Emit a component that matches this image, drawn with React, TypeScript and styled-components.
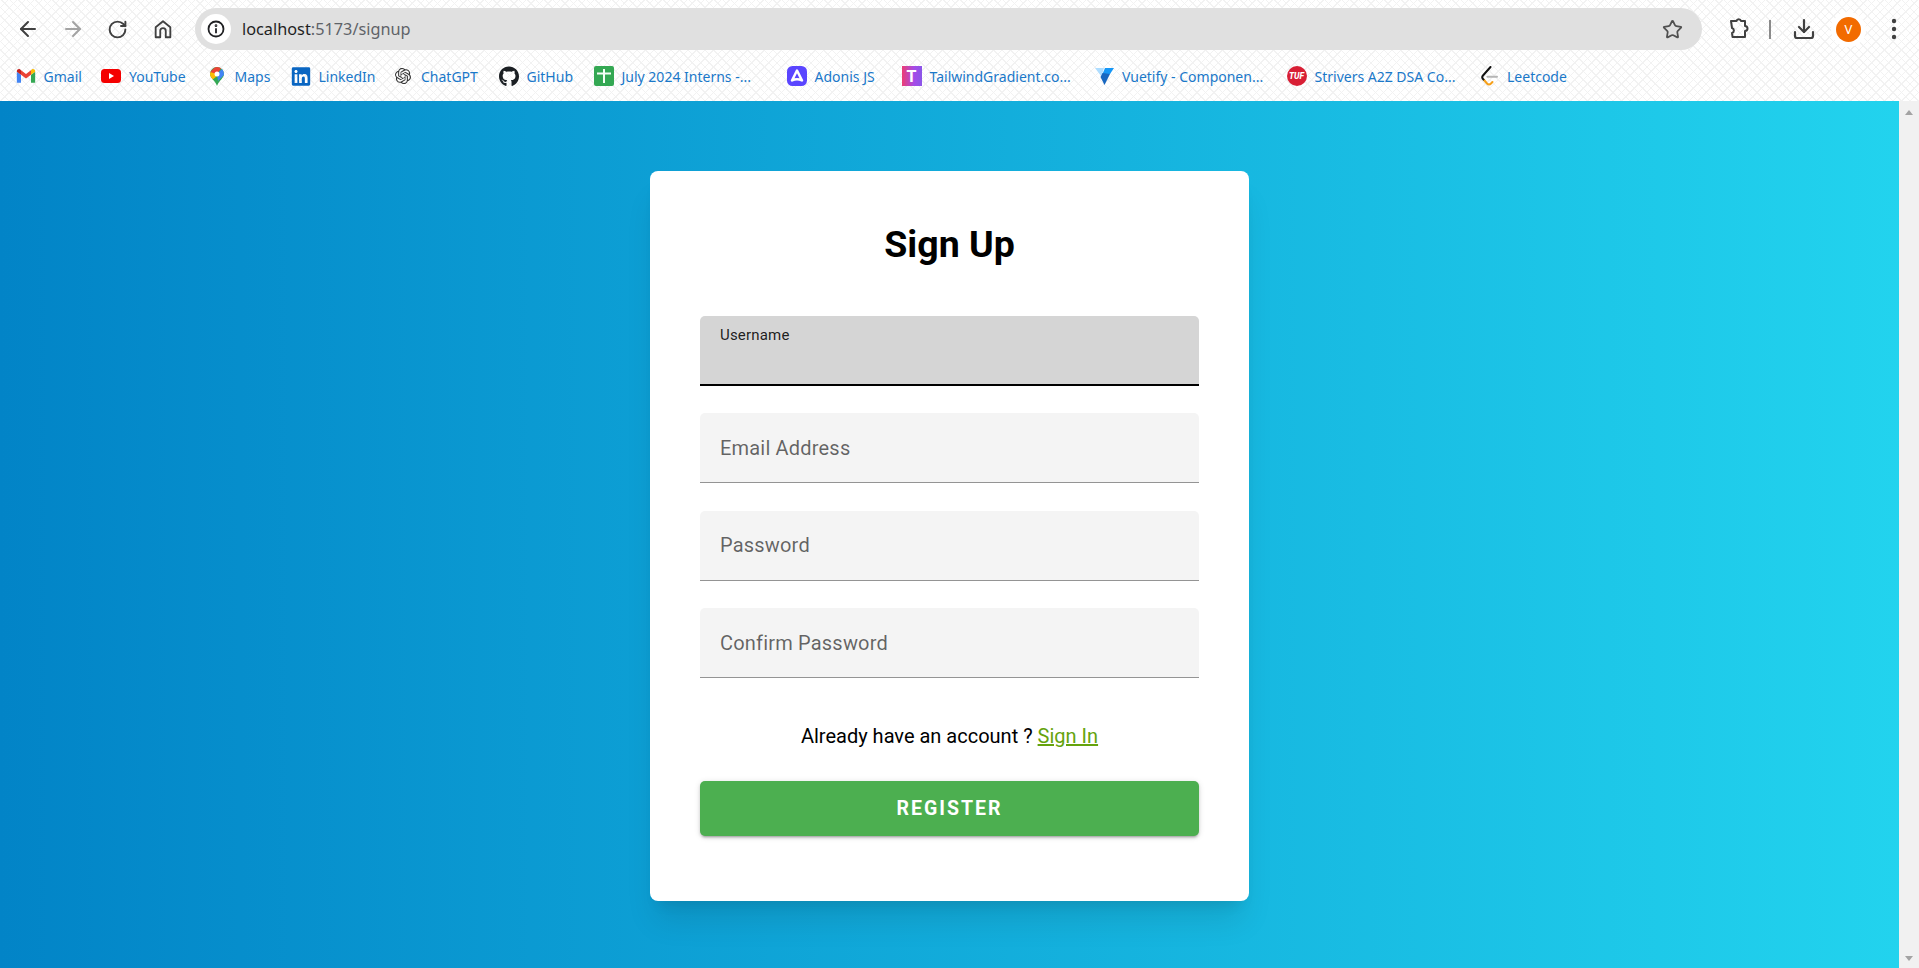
import type { ReactNode } from "react";
import styled, { createGlobalStyle } from "styled-components";
import { ArrowLeft, ArrowRight, Download, RotateCw, Star } from "lucide-react";
import { FaGithub, FaLinkedin } from "react-icons/fa";
import { SiOpenai } from "react-icons/si";

const GlobalStyle = createGlobalStyle`
  html, body {
    margin: 0;
    padding: 0;
    height: 100%;
    overflow: hidden;
    background: #fff;
  }
  * {
    box-sizing: border-box;
  }
`;

const Page = styled.div`
  display: flex;
  flex-direction: column;
  width: 1919px;
  height: 968px;
  overflow: hidden;
`;

/* browser chrome */

const Chrome = styled.header`
  display: flex;
  flex-direction: column;
  height: 101px;
  flex: none;
  background-color: #fff;
  background-image:
    repeating-linear-gradient(45deg, #f2f2f2 0 1px, transparent 1px 6px),
    repeating-linear-gradient(-45deg, #f2f2f2 0 1px, transparent 1px 6px);
  font-family: "Noto Sans", sans-serif;
`;

const Toolbar = styled.div`
  display: flex;
  align-items: center;
  height: 58px;
  padding: 0 3px 0 5px;
`;

const ToolButton = styled.div<{ $muted?: boolean }>`
  display: flex;
  flex: none;
  align-items: center;
  justify-content: center;
  width: 45px;
  height: 42px;
  color: ${(p) => (p.$muted ? "#a3a3a3" : "#404040")};
`;

const AddressBar = styled.div`
  display: flex;
  flex: 1;
  align-items: center;
  height: 42px;
  margin: 0 13px 0 10px;
  padding: 0 19px 0 6px;
  border-radius: 21px;
  background: #e0e0e0;
`;

const InfoBadge = styled.div`
  display: flex;
  flex: none;
  align-items: center;
  justify-content: center;
  width: 30px;
  height: 30px;
  border-radius: 50%;
  background: #fff;
  color: #202124;
`;

const Url = styled.div`
  flex: 1;
  margin-left: 11px;
  font-size: 16.3px;
  color: #5f6368;
  white-space: nowrap;

  b {
    font-weight: 400;
    color: #1f1f1f;
  }
`;

const Separator = styled.div`
  flex: none;
  width: 2px;
  height: 19px;
  margin: 0 10px 0 9px;
  background: #8a8a8a;
`;

const AvatarRing = styled.div`
  display: flex;
  flex: none;
  align-items: center;
  justify-content: center;
  width: 45px;
  height: 40px;
`;

const Avatar = styled.div`
  display: flex;
  align-items: center;
  justify-content: center;
  width: 25px;
  height: 25px;
  border-radius: 50%;
  background: #f26b00;
  box-shadow: 0 0 0 5px #fff;
  color: #fff;
  font-size: 13px;
`;

const Bookmarks = styled.nav`
  display: flex;
  align-items: center;
  gap: 20.5px;
  height: 36px;
  padding: 0 0 0 15.5px;
`;

const Bookmark = styled.a`
  display: flex;
  flex: none;
  align-items: center;
  gap: 8px;
  color: #1a78c9;
  font-size: 14px;
`;

const BookmarkIcon = styled.span`
  display: flex;
  flex: none;
  align-items: center;
  justify-content: center;
  width: 20px;
  height: 20px;
`;

const BookmarkLabel = styled.span<{ $width: number }>`
  display: block;
  width: ${(p) => p.$width}px;
  white-space: nowrap;
`;

const GradientTile = styled.span`
  display: flex;
  align-items: center;
  justify-content: center;
  width: 20px;
  height: 20px;
  background: linear-gradient(90deg, #ec3d74, #a54be8 60%, #8a56e8);
  color: #fff;
  font: 700 16px "Roboto", sans-serif;
`;

const TufBadge = styled.span`
  display: flex;
  align-items: center;
  justify-content: center;
  width: 20px;
  height: 20px;
  border-radius: 50%;
  background: #d81f35;
  color: #fff;
  font: italic 800 8.5px "Roboto", sans-serif;
`;

/* page content */

const Viewport = styled.div`
  display: flex;
  flex: 1;
  min-height: 0;
`;

const Main = styled.main`
  display: flex;
  flex: 1;
  justify-content: center;
  align-items: flex-start;
  padding-top: 70px;
  background: linear-gradient(to right, #0284c7, #22d3ee);
  font-family: "Roboto", sans-serif;
`;

const Card = styled.section`
  display: flex;
  flex-direction: column;
  width: 599px;
  height: 730px;
  padding: 50px 50px 0;
  border-radius: 8px;
  background: #fff;
  box-shadow: 0 25px 31px -6px rgba(0, 0, 0, 0.1), 0 10px 13px -8px rgba(0, 0, 0, 0.1);
`;

const Title = styled.h1`
  margin: 0 0 48px;
  font-size: 37.5px;
  line-height: 47px;
  font-weight: 700;
  text-align: center;
  color: #000;
`;

const Fields = styled.div`
  display: flex;
  flex-direction: column;
  gap: 27.3px;
`;

const Field = styled.div<{ $active?: boolean }>`
  display: flex;
  align-items: ${(p) => (p.$active ? "flex-start" : "center")};
  height: 70px;
  padding: ${(p) => (p.$active ? "10px 20px 0" : "1.5px 20px 0")};
  border-radius: 5px 5px 0 0;
  border-bottom: ${(p) => (p.$active ? "2px solid #000" : "1px solid #949494")};
  background: ${(p) => (p.$active ? "#d5d5d5" : "#f4f4f4")};
`;

const FieldLabel = styled.label<{ $active?: boolean }>`
  font-size: ${(p) => (p.$active ? "15px" : "20px")};
  letter-spacing: 0.19px;
  line-height: 1.25;
  color: ${(p) => (p.$active ? "rgba(0, 0, 0, 0.87)" : "rgba(0, 0, 0, 0.6)")};
`;

const SignInRow = styled.p`
  margin: 45px 0 0;
  font-size: 20px;
  line-height: 26px;
  text-align: center;
  color: #000;
`;

const SignInLink = styled.a`
  color: #65a30d;
  text-decoration: underline;
`;

const RegisterButton = styled.button`
  flex: none;
  height: 55px;
  margin-top: 32px;
  border: 0;
  border-radius: 5px;
  background: #4caf50;
  color: #fff;
  font-family: inherit;
  font-size: 19.5px;
  font-weight: 700;
  letter-spacing: 2px;
  box-shadow: 0 3px 2px -2px rgba(0, 0, 0, 0.2), 0 2px 3px 0 rgba(0, 0, 0, 0.14), 0 1px 6px 0 rgba(0, 0, 0, 0.12);
`;

const Scrollbar = styled.aside`
  display: flex;
  flex: none;
  flex-direction: column;
  justify-content: space-between;
  align-items: center;
  width: 20px;
  padding: 9px 0 7px;
  background: #f1f1f1;
`;

const ScrollArrow = styled.span<{ $down?: boolean }>`
  width: 0;
  height: 0;
  border-left: 4.5px solid transparent;
  border-right: 4.5px solid transparent;
  ${(p) => (p.$down ? "border-top: 5px solid #a3a3a3;" : "border-bottom: 5px solid #a3a3a3;")}
`;

/* drawn icons */

const HomeIcon = () => (
  <svg width="22" height="22" viewBox="0 0 24 24" fill="none" stroke="currentColor" strokeWidth="2" strokeLinejoin="round">
    <path d="M4 21V10l8-6.5L20 10v11h-5v-7a3 3 0 0 0-6 0v7z" />
  </svg>
);

const ExtensionIcon = () => (
  <svg width="24" height="24" viewBox="0 0 24 24" fill="none" stroke="currentColor" strokeWidth="2" strokeLinejoin="round">
    <path d="M5 4h5.5a2.3 2.3 0 0 1 4.5 0H19v5a2.5 2.5 0 0 1 0 5v6H6.5l-.5-4a2.6 2.6 0 0 0 0-5L5 4z" />
  </svg>
);

const InfoIcon = () => (
  <svg width="18" height="18" viewBox="0 0 24 24" fill="none" stroke="currentColor" strokeWidth="2.4">
    <circle cx="12" cy="12" r="10" />
    <path d="M12 11v6.5" />
    <circle cx="12" cy="7.5" r="0.6" />
  </svg>
);

const KebabIcon = () => (
  <svg width="6" height="22" viewBox="0 0 6 22" fill="currentColor">
    <circle cx="3" cy="3" r="2.2" />
    <circle cx="3" cy="11" r="2.2" />
    <circle cx="3" cy="19" r="2.2" />
  </svg>
);

const GmailIcon = () => (
  <svg width="20" height="20" viewBox="0 0 24 24">
    <path fill="#4285f4" d="M1 20h5V10.5L1 7z" />
    <path fill="#34a853" d="M18 20h5V7l-5 3.5z" />
    <path fill="#fbbc04" d="M18 5v5.5L23 7V6.2c0-2-2.4-3.2-4-2z" />
    <path fill="#ea4335" d="M6 10.5V5l6 4.5L18 5v5.5L12 15z" />
    <path fill="#c5221f" d="M1 6.2V7l5 3.5V5l-1-.8c-1.6-1.2-4 0-4 2z" />
  </svg>
);

const YoutubeIcon = () => (
  <svg width="20" height="14" viewBox="0 0 20 14">
    <rect width="20" height="14" rx="3.5" fill="#f40000" />
    <path fill="#fff" d="M8 4l5 3-5 3z" />
  </svg>
);

const MapsIcon = () => (
  <svg width="14" height="19" viewBox="0 0 14 19">
    <clipPath id="maps-pin">
      <path d="M7 0a7 7 0 0 0-7 7c0 4 5 6.5 7 12 2-5.5 7-8 7-12a7 7 0 0 0-7-7z" />
    </clipPath>
    <g clipPath="url(#maps-pin)">
      <rect width="14" height="19" fill="#34a853" />
      <path fill="#fbbc04" d="M0 5h5l2 4-6 5-1-2z" />
      <path fill="#4285f4" d="M7 7l7-7v8l-6 6z" />
      <path fill="#ea4335" d="M0 5L5 0h7L7 7z" />
    </g>
    <circle cx="7" cy="7" r="2.5" fill="#fff" />
  </svg>
);

const SheetsIcon = () => (
  <svg width="20" height="20" viewBox="0 0 20 20">
    <rect width="20" height="20" rx="2" fill="#34a853" />
    <path fill="#f4fff6" d="M3 6.5h14v2H3zM9 3h2v14H9z" />
  </svg>
);

const AdonisIcon = () => (
  <svg width="20" height="20" viewBox="0 0 20 20">
    <rect width="20" height="20" rx="5.5" fill="#5a45ff" />
    <path fill="none" stroke="#fff" strokeWidth="2.5" strokeLinejoin="round" d="M10 4.5l5 10c-3.400-1.800-6.600-1.800-10 0z" />
  </svg>
);

const VuetifyIcon = () => (
  <svg width="19" height="19" viewBox="0 0 19 19">
    <path fill="#aeddff" d="M0 1h9l-1.500 5-1.500 3z" />
    <path fill="#1697f6" d="M10 1h9l-4 6H7.500z" />
    <path fill="#1867c0" d="M15 7l-5.500 11L5.500 10 7.500 6z" />
  </svg>
);

const LeetcodeIcon = () => (
  <svg width="18" height="20" viewBox="0 0 18 20" fill="none" strokeWidth="2" strokeLinecap="round">
    <path stroke="#111" d="M10.500 1L3 9.500c-1 1.200-1 2.500 0 3.500l1 1" />
    <path stroke="#f6a01a" d="M4.500 14.500l2.500 3c1.200 1.200 2.800 1.200 4 0l1.500-1.500" />
    <path stroke="#b5b5b5" d="M7.500 10.800H17" />
  </svg>
);

const bookmarks: { label: string; width: number; icon: ReactNode }[] = [
  { label: "Gmail", width: 37, icon: <GmailIcon /> },
  { label: "YouTube", width: 57, icon: <YoutubeIcon /> },
  { label: "Maps", width: 35.5, icon: <MapsIcon /> },
  { label: "LinkedIn", width: 54, icon: <FaLinkedin size={21} color="#0a66c2" /> },
  { label: "ChatGPT", width: 57, icon: <SiOpenai size={16} color="#333" /> },
  { label: "GitHub", width: 46.5, icon: <FaGithub size={21} color="#1b1f23" /> },
  { label: "July 2024 Interns -...", width: 144.5, icon: <SheetsIcon /> },
  { label: "Adonis JS", width: 66.5, icon: <AdonisIcon /> },
  { label: "TailwindGradient.co...", width: 144, icon: <GradientTile>T</GradientTile> },
  { label: "Vuetify - Componen...", width: 144, icon: <VuetifyIcon /> },
  { label: "Strivers A2Z DSA Co...", width: 144, icon: <TufBadge>TUF</TufBadge> },
  { label: "Leetcode", width: 60, icon: <LeetcodeIcon /> },
];

const fields = ["Email Address", "Password", "Confirm Password"];

export default function App() {
  return (
    <Page>
      <GlobalStyle />
      <Chrome>
        <Toolbar>
          <ToolButton><ArrowLeft size={24} strokeWidth={2} /></ToolButton>
          <ToolButton $muted><ArrowRight size={24} strokeWidth={2} /></ToolButton>
          <ToolButton><RotateCw size={21} strokeWidth={2.2} /></ToolButton>
          <ToolButton><HomeIcon /></ToolButton>
          <AddressBar>
            <InfoBadge><InfoIcon /></InfoBadge>
            <Url><b>localhost</b>:5173/signup</Url>
            <Star size={21} strokeWidth={2} color="#505050" />
          </AddressBar>
          <ToolButton><ExtensionIcon /></ToolButton>
          <Separator />
          <ToolButton><Download size={24} strokeWidth={2.2} /></ToolButton>
          <AvatarRing><Avatar>V</Avatar></AvatarRing>
          <ToolButton><KebabIcon /></ToolButton>
        </Toolbar>
        <Bookmarks>
          {bookmarks.map((b) => (
            <Bookmark key={b.label}>
              <BookmarkIcon>{b.icon}</BookmarkIcon>
              <BookmarkLabel $width={b.width}>{b.label}</BookmarkLabel>
            </Bookmark>
          ))}
        </Bookmarks>
      </Chrome>
      <Viewport>
        <Main>
          <Card>
            <Title>Sign Up</Title>
            <Fields>
              <Field $active>
                <FieldLabel $active>Username</FieldLabel>
              </Field>
              {fields.map((f) => (
                <Field key={f}>
                  <FieldLabel>{f}</FieldLabel>
                </Field>
              ))}
            </Fields>
            <SignInRow>
              Already have an account ? <SignInLink>Sign In</SignInLink>
            </SignInRow>
            <RegisterButton>REGISTER</RegisterButton>
          </Card>
        </Main>
        <Scrollbar>
          <ScrollArrow />
          <ScrollArrow $down />
        </Scrollbar>
      </Viewport>
    </Page>
  );
}
